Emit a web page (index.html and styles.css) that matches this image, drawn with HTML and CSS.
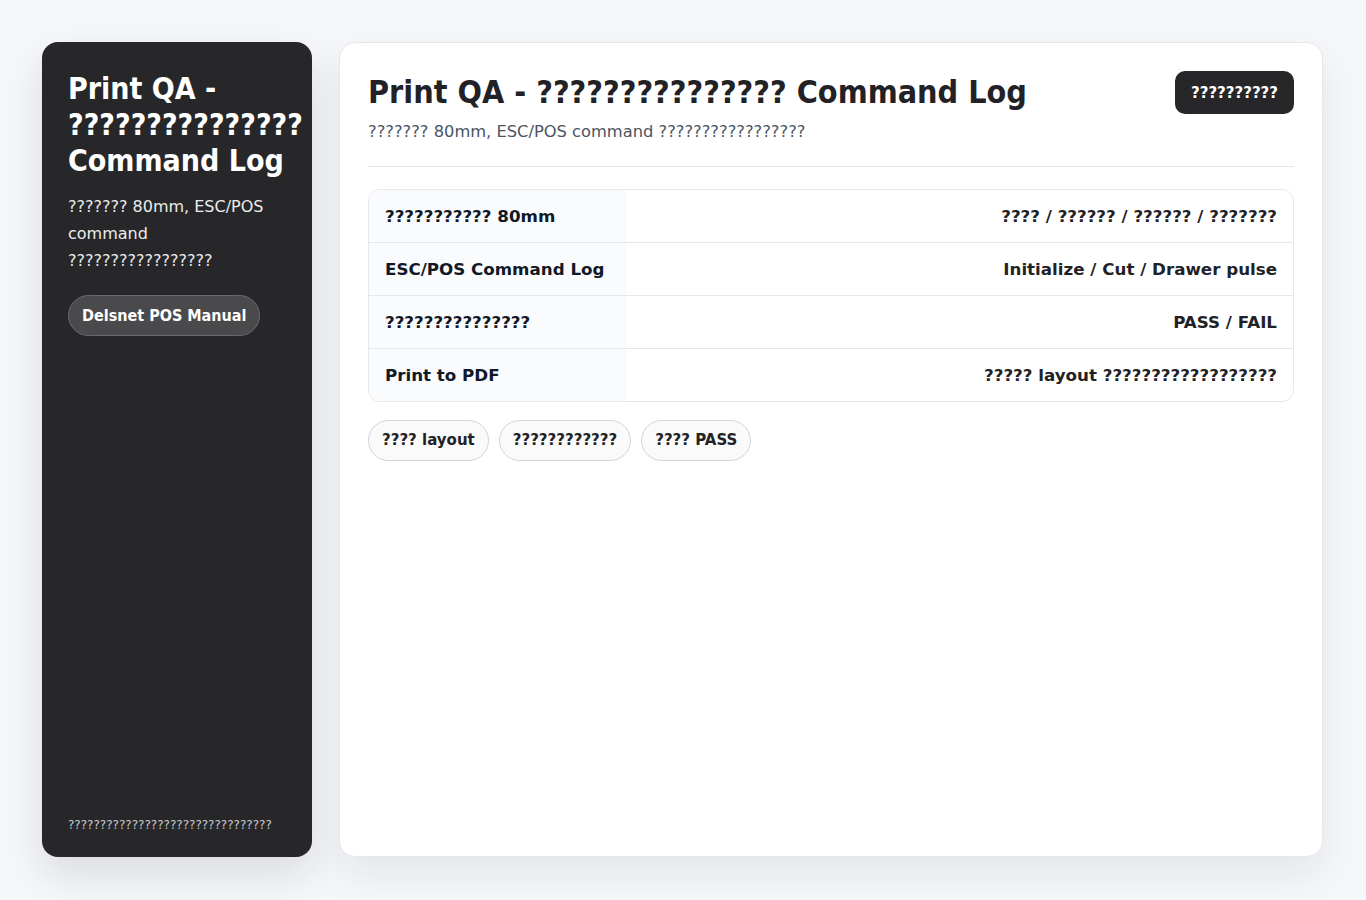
FILE: index.html
```html
<!DOCTYPE html>
<html lang="en">
<head>
<meta charset="utf-8">
<title>Print QA</title>
<link rel="stylesheet" href="styles.css">
</head>
<body>
<div class="layout">
  <aside class="sidebar">
    <div class="side-top">
      <h1 class="side-title">Print QA - ??????????????? Command Log</h1>
      <p class="side-sub">??????? 80mm, ESC/POS command ?????????????????</p>
      <a class="side-btn" href="#">Delsnet POS Manual</a>
    </div>
    <div class="side-foot">????????????????????????????????</div>
  </aside>
  <main class="main">
    <header class="head">
      <div class="head-text">
        <h2 class="title">Print QA - ??????????????? Command Log</h2>
        <p class="sub">??????? 80mm, ESC/POS command ?????????????????</p>
      </div>
      <button class="action">??????????</button>
    </header>
    <div class="table">
      <div class="row"><div class="k">??????????? 80mm</div><div class="v">???? / ?????? / ?????? / ???????</div></div>
      <div class="row"><div class="k">ESC/POS Command Log</div><div class="v">Initialize / Cut / Drawer pulse</div></div>
      <div class="row"><div class="k">???????????????</div><div class="v">PASS / FAIL</div></div>
      <div class="row"><div class="k">Print to PDF</div><div class="v">????? layout ??????????????????</div></div>
    </div>
    <div class="chips">
      <span class="chip">???? layout</span>
      <span class="chip">????????????</span>
      <span class="chip">???? PASS</span>
    </div>
  </main>
</div>
</body>
</html>
```

FILE: styles.css
```css
* { box-sizing: border-box; }
html, body { margin: 0; padding: 0; }
body {
  background: #f6f7f9;
  font-family: "DejaVu Sans", sans-serif;
  color: #222226;
}
.layout {
  display: flex;
  gap: 27px;
  padding: 42px 43px 43px 42px;
  height: 900px;
}
.sidebar {
  width: 270px;
  flex: none;
  background: #27272a;
  border-radius: 16px;
  padding: 29px 26px 24px;
  color: #fff;
  display: flex;
  flex-direction: column;
  justify-content: space-between;
  box-shadow: 0 18px 40px rgba(20, 24, 40, 0.12);
}
.side-title {
  margin: 0;
  font-family: "DejaVu Sans Condensed", "DejaVu Sans", sans-serif;
  font-size: 30px;
  line-height: 36px;
  font-weight: 700;
}
.side-sub {
  margin: 14px 0 0;
  font-size: 16px;
  line-height: 27px;
  color: #ececec;
}
.side-btn {
  display: inline-block;
  margin-top: 21px;
  padding: 0 13px;
  height: 41px;
  line-height: 39px;
  border-radius: 21px;
  background: #4a4a4d;
  border: 1px solid #6b6b6e;
  color: #fff;
  font-family: "DejaVu Sans Condensed", "DejaVu Sans", sans-serif;
  font-weight: 700;
  font-size: 16px;
  text-decoration: none;
}
.side-foot {
  font-size: 12px;
  color: #c8c8cc;
  padding-bottom: 1px;
}
.main {
  flex: 1;
  background: #fff;
  border: 1px solid #e5e7eb;
  border-radius: 16px;
  padding: 28px 28px;
  box-shadow: 0 18px 40px rgba(20, 24, 40, 0.08);
}
.head {
  display: flex;
  justify-content: space-between;
  align-items: flex-start;
  padding-bottom: 24px;
  border-bottom: 1px solid #e5e7eb;
}
.title {
  margin: 0;
  font-family: "DejaVu Sans Condensed", "DejaVu Sans", sans-serif;
  font-size: 32px;
  line-height: 42px;
  font-weight: 700;
  color: #222226;
}
.sub {
  margin: 9px 0 0;
  font-size: 16.3px;
  line-height: 20px;
  color: #4b5563;
}
.action {
  height: 43px;
  padding: 0 16px;
  border: none;
  border-radius: 10px;
  background: #27272a;
  color: #fff;
  font-family: "DejaVu Sans", sans-serif;
  font-size: 15px;
  font-weight: 700;
}
.table {
  margin-top: 22px;
  border: 1px solid #e5e7eb;
  border-radius: 12px;
  overflow: hidden;
}
.row {
  display: flex;
  height: 53px;
  border-top: 1px solid #e5e7eb;
}
.row:first-child { border-top: none; height: 52px; }
.k {
  width: 258px;
  flex: none;
  background: #f9fbfd;
  padding: 0 16px;
  display: flex;
  align-items: center;
  font-weight: 700;
  font-size: 16.7px;
  color: #111827;
}
.v {
  flex: 1;
  padding: 0 16px;
  display: flex;
  align-items: center;
  justify-content: flex-end;
  font-weight: 700;
  font-size: 16.7px;
  color: #222226;
}
.chips {
  display: flex;
  gap: 10px;
  margin-top: 18px;
}
.chip {
  height: 41px;
  line-height: 39px;
  padding: 0 13px;
  border: 1px solid #d4d4d8;
  border-radius: 21px;
  background: #fafafa;
  font-weight: 700;
  font-size: 15px;
  color: #222226;
}
```
